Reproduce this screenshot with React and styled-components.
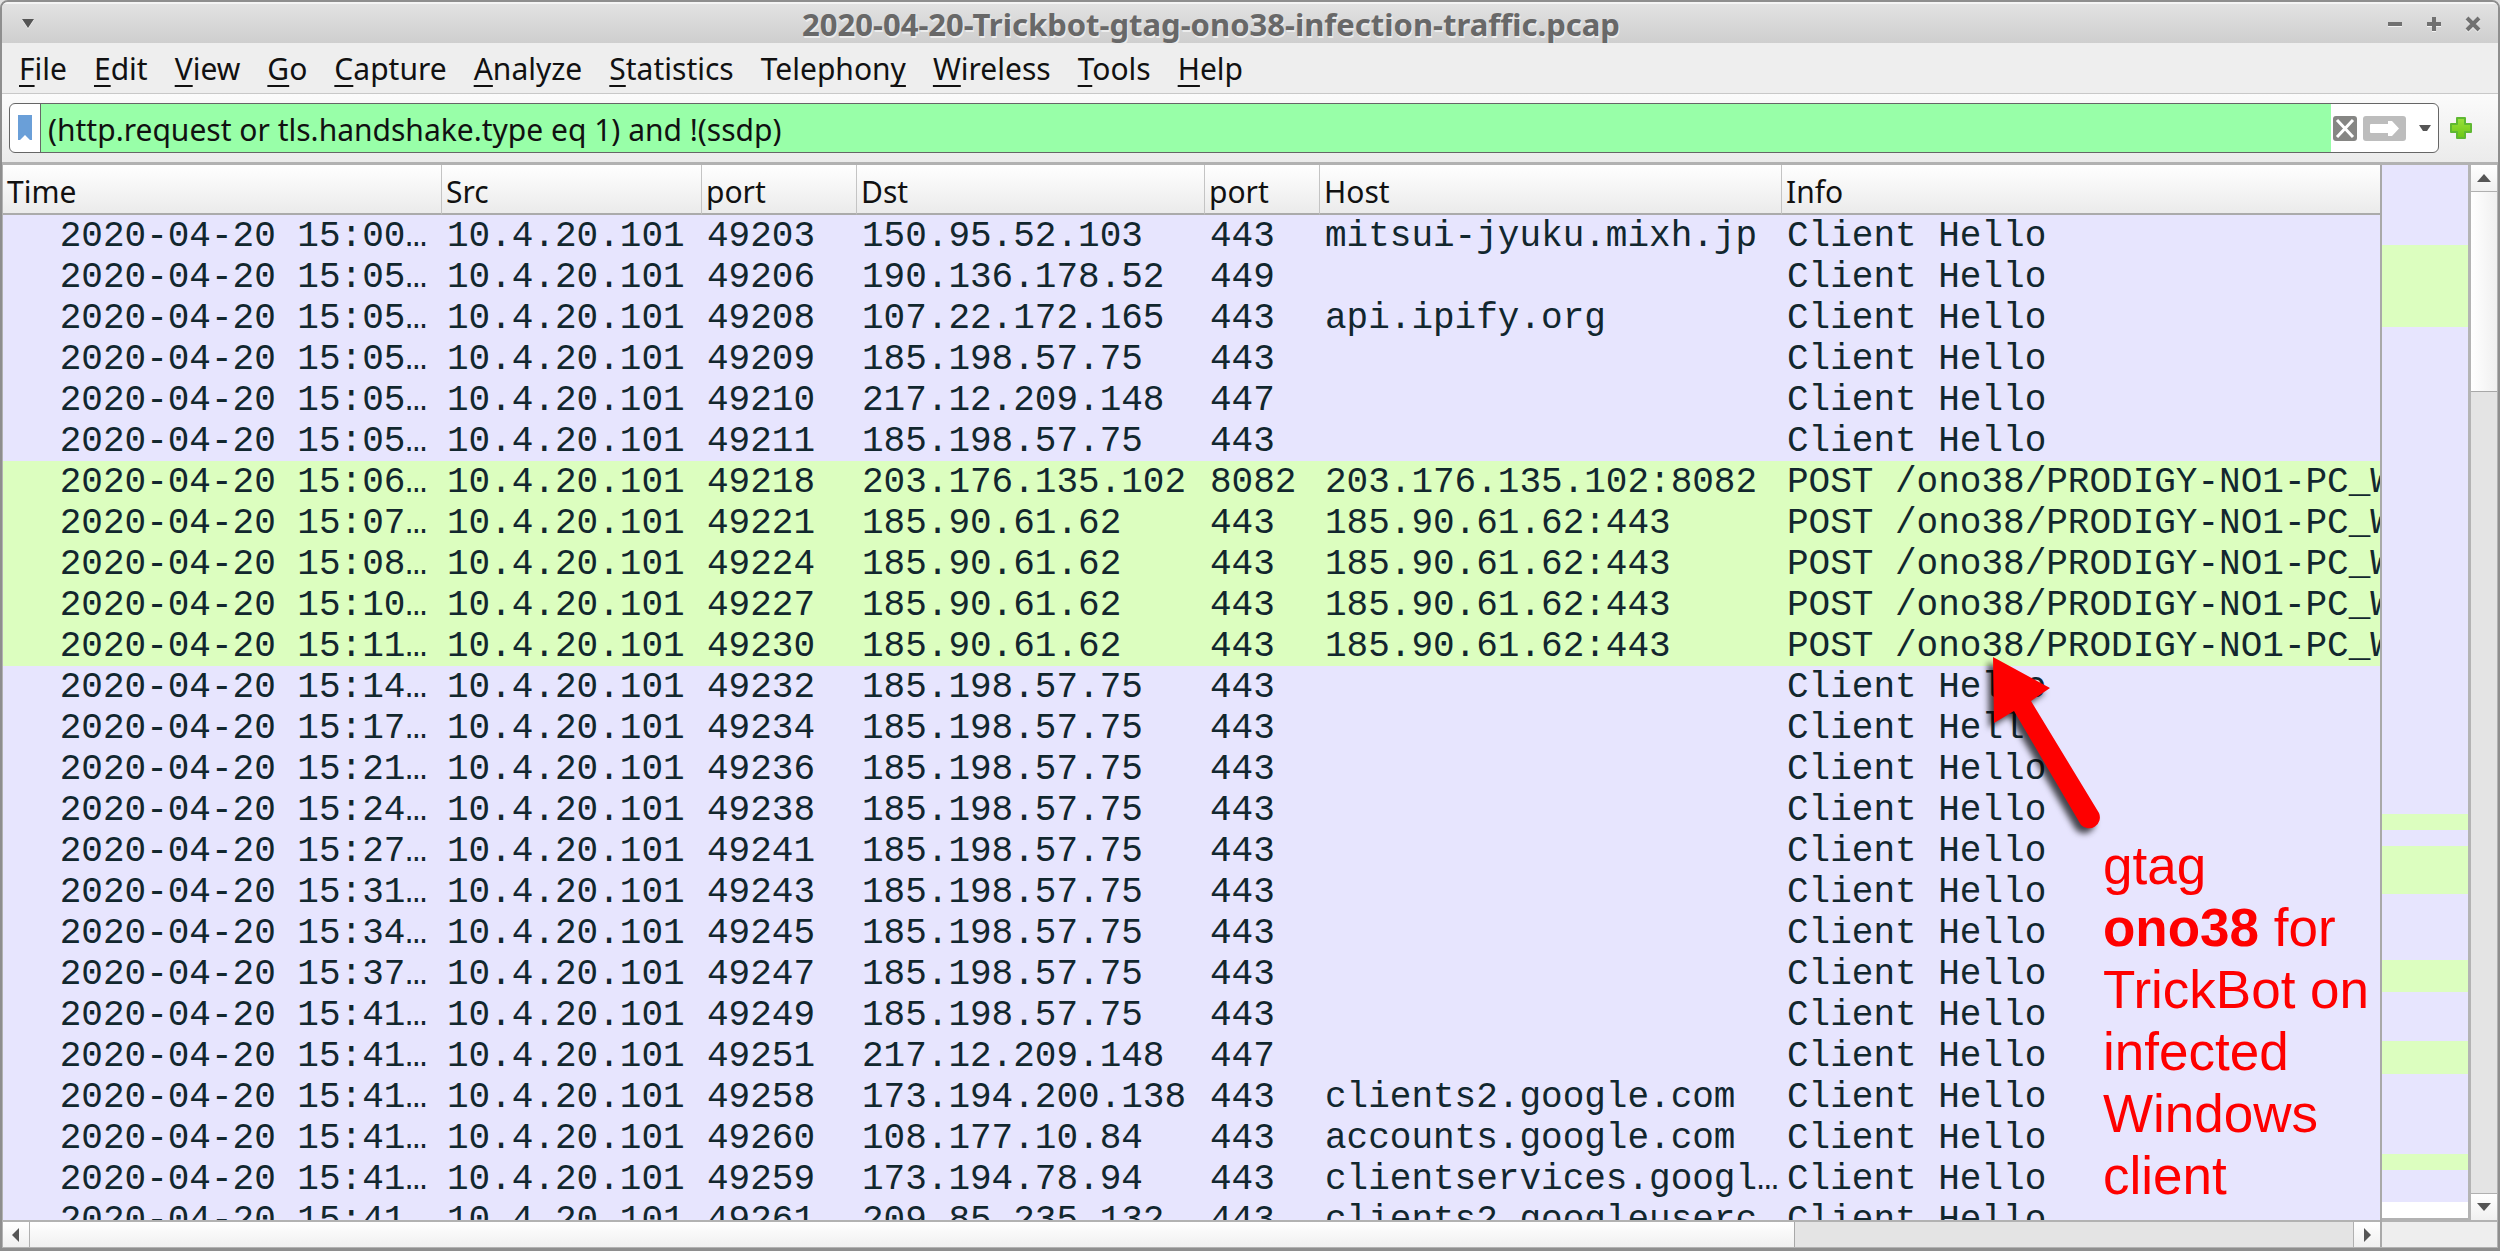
import React from "react"
import styled, { createGlobalStyle } from "styled-components"

const MENUS = [
  ["", "F", "ile"],
  ["", "E", "dit"],
  ["", "V", "iew"],
  ["", "G", "o"],
  ["", "C", "apture"],
  ["", "A", "nalyze"],
  ["", "S", "tatistics"],
  ["Telephon", "y", ""],
  ["", "W", "ireless"],
  ["", "T", "ools"],
  ["", "H", "elp"],
]

const COLUMNS = [
  { title: "Time", width: 439 },
  { title: "Src", width: 260 },
  { title: "port", width: 155 },
  { title: "Dst", width: 348 },
  { title: "port", width: 115 },
  { title: "Host", width: 462 },
  { title: "Info" },
]

const HELLO = "Client Hello"
const POST = "POST /ono38/PRODIGY-NO1-PC_W"

const PACKETS = [
  ["15:00", "49203", "150.95.52.103", "443", "mitsui-jyuku.mixh.jp", HELLO],
  ["15:05", "49206", "190.136.178.52", "449", "", HELLO],
  ["15:05", "49208", "107.22.172.165", "443", "api.ipify.org", HELLO],
  ["15:05", "49209", "185.198.57.75", "443", "", HELLO],
  ["15:05", "49210", "217.12.209.148", "447", "", HELLO],
  ["15:05", "49211", "185.198.57.75", "443", "", HELLO],
  ["15:06", "49218", "203.176.135.102", "8082", "203.176.135.102:8082", POST],
  ["15:07", "49221", "185.90.61.62", "443", "185.90.61.62:443", POST],
  ["15:08", "49224", "185.90.61.62", "443", "185.90.61.62:443", POST],
  ["15:10", "49227", "185.90.61.62", "443", "185.90.61.62:443", POST],
  ["15:11", "49230", "185.90.61.62", "443", "185.90.61.62:443", POST],
  ["15:14", "49232", "185.198.57.75", "443", "", HELLO],
  ["15:17", "49234", "185.198.57.75", "443", "", HELLO],
  ["15:21", "49236", "185.198.57.75", "443", "", HELLO],
  ["15:24", "49238", "185.198.57.75", "443", "", HELLO],
  ["15:27", "49241", "185.198.57.75", "443", "", HELLO],
  ["15:31", "49243", "185.198.57.75", "443", "", HELLO],
  ["15:34", "49245", "185.198.57.75", "443", "", HELLO],
  ["15:37", "49247", "185.198.57.75", "443", "", HELLO],
  ["15:41", "49249", "185.198.57.75", "443", "", HELLO],
  ["15:41", "49251", "217.12.209.148", "447", "", HELLO],
  ["15:41", "49258", "173.194.200.138", "443", "clients2.google.com", HELLO],
  ["15:41", "49260", "108.177.10.84", "443", "accounts.google.com", HELLO],
  ["15:41", "49259", "173.194.78.94", "443", "clientservices.googl…", HELLO],
  ["15:41", "49261", "209.85.235.132", "443", "clients2.googleuserc…", HELLO],
]

// colour bands of the intelligent scrollbar, top to bottom
const BANDS = [
  ["tls", 80],
  ["http", 82],
  ["tls", 487],
  ["http", 16],
  ["tls", 16],
  ["http", 48],
  ["tls", 66],
  ["http", 32],
  ["tls", 49],
  ["http", 33],
  ["tls", 80],
  ["http", 16],
  ["tls", 32],
  ["none", 16],
]

const FILLS = { tls: "#e7e5fe", http: "#dcfebf", none: "#ffffff" }

const Triangle = ({ points, size = 14 }) => (
  <svg width={size} height={size} viewBox="0 0 14 14" fill="#555" aria-hidden="true">
    <polygon points={points} />
  </svg>
)

const DOWN = "0,3 14,3 7,11"
const UP = "0,11 14,11 7,3"
const LEFT = "10,0 10,14 3,7"
const RIGHT = "4,0 4,14 11,7"

const App = () => (
  <>
    <GlobalStyle />
    <Window>
      <TitleBar>
        <WindowButton aria-label="Window menu">
          <Triangle points="1,2 13,2 7,11" />
        </WindowButton>
        <Title>2020-04-20-Trickbot-gtag-ono38-infection-traffic.pcap</Title>
        <WindowButton aria-label="Minimize">
          <Glyph><path d="M1 8H15" /></Glyph>
        </WindowButton>
        <WindowButton aria-label="Maximize">
          <Glyph><path d="M1 8H15M8 1V15" /></Glyph>
        </WindowButton>
        <WindowButton aria-label="Close">
          <Glyph><path d="M2 2L14 14M14 2L2 14" /></Glyph>
        </WindowButton>
      </TitleBar>

      <MenuBar>
        {MENUS.map(([before, key, after]) => (
          <MenuButton key={before + key + after}>
            {before}
            <Mnemonic>{key}</Mnemonic>
            {after}
          </MenuButton>
        ))}
      </MenuBar>

      <FilterBar>
        <FilterBox>
          <BookmarkButton aria-label="Bookmarks">
            <svg width="14" height="26" viewBox="0 0 14 26" aria-hidden="true">
              <path d="M0 0H14V25L12 25L7 20L2 25H0Z" fill="#6a9fd8" />
            </svg>
          </BookmarkButton>
          <FilterInput
            aria-label="Display filter"
            defaultValue="(http.request or tls.handshake.type eq 1) and !(ssdp)"
          />
          <IconButton aria-label="Clear filter">
            <svg width="24" height="25" viewBox="0 0 24 25" aria-hidden="true">
              <rect width="24" height="25" rx="3" fill="#868684" />
              <path d="M4 4L20 21M20 4L4 21" stroke="#fff" strokeWidth="3" />
            </svg>
          </IconButton>
          <IconButton aria-label="Apply filter">
            <svg width="43" height="25" viewBox="0 0 43 25" aria-hidden="true">
              <rect width="43" height="25" rx="3" fill="#bdbdbd" />
              <path d="M8 8H25V5H29L36 12.500L29 20H25V17H8Q7 17 7 16V9Q7 8 8 8Z" fill="#fff" />
            </svg>
          </IconButton>
          <DropButton aria-label="Recent filters">
            <Triangle points="1,4 13,4 9,10 5,10" />
          </DropButton>
        </FilterBox>
        <IconButton aria-label="Add filter button">
          <svg width="22" height="22" viewBox="0 0 22 22" aria-hidden="true">
            <defs>
              <linearGradient id="plus" x1="0" y1="0" x2="0" y2="1">
                <stop offset="0" stopColor="#9ae03c" />
                <stop offset="1" stopColor="#6cc814" />
              </linearGradient>
            </defs>
            <path
              d="M7 1H15V7H21V15H15V21H7V15H1V7H7Z"
              fill="url(#plus)"
              stroke="#5fb832"
              strokeWidth="2"
              strokeLinejoin="round"
            />
          </svg>
        </IconButton>
      </FilterBar>

      <Content>
        <ListColumn>
          <ListPane>
            <PacketTable>
              <colgroup>
                {COLUMNS.map((col, i) => (
                  <Col key={i} $width={col.width} />
                ))}
              </colgroup>
              <thead>
                <tr>
                  {COLUMNS.map((col, i) => (
                    <HeaderCell key={i} scope="col">{col.title}</HeaderCell>
                  ))}
                </tr>
              </thead>
              <tbody>
                {PACKETS.map(([time, srcPort, dst, dstPort, host, info]) => (
                  <Row key={srcPort} $kind={info === POST ? "http" : "tls"}>
                    <TimeCell>2020-04-20 {time}…</TimeCell>
                    <Cell>10.4.20.101</Cell>
                    <Cell>{srcPort}</Cell>
                    <Cell>{dst}</Cell>
                    <Cell>{dstPort}</Cell>
                    <Cell>{host}</Cell>
                    <Cell>{info}</Cell>
                  </Row>
                ))}
              </tbody>
            </PacketTable>
            <Callout>
              <Arrow width="120" height="182" viewBox="0 0 120 182" aria-hidden="true">
                <path d="M4 4L61 35L42 48L110 160A11 11 0 0 1 92 172L25 58L5 70Z" fill="#fe0000" />
              </Arrow>
              <Note>
                gtag
                <br />
                <b>ono38</b> for TrickBot on infected Windows client
              </Note>
            </Callout>
          </ListPane>
          <HorizontalBar>
            <ScrollButton aria-label="Scroll left">
              <Triangle points={LEFT} />
            </ScrollButton>
            <HorizontalTrack>
              <HorizontalThumb />
            </HorizontalTrack>
            <ScrollButton aria-label="Scroll right">
              <Triangle points={RIGHT} />
            </ScrollButton>
          </HorizontalBar>
        </ListColumn>
        <SideColumn>
          <SidePane>
            <Minimap>
              {BANDS.map(([kind, size], i) => (
                <Band key={i} $kind={kind} $size={size} />
              ))}
            </Minimap>
            <VerticalBar>
              <ScrollButton $vertical aria-label="Scroll up">
                <Triangle points={UP} />
              </ScrollButton>
              <VerticalTrack>
                <VerticalThumb />
              </VerticalTrack>
              <ScrollButton $vertical aria-label="Scroll down">
                <Triangle points={DOWN} />
              </ScrollButton>
            </VerticalBar>
          </SidePane>
          <Corner />
        </SideColumn>
      </Content>
    </Window>
  </>
)

export default App

const GlobalStyle = createGlobalStyle`
  * {
    box-sizing: border-box;
  }
  body {
    margin: 0;
    background: #e0e0e0;
    font-family: "Noto Sans", "Open Sans", sans-serif;
    font-size: 30px;
    color: #111;
  }
  button,
  input {
    margin: 0;
    padding: 0;
    border: 0;
    background: none;
    color: inherit;
    font: inherit;
  }
`

const Window = styled.div`
  display: flex;
  flex-direction: column;
  height: 100vh;
  border: solid #8e8e8e;
  border-width: 2px 2px 3px;
  border-radius: 8px 8px 0 0;
  background: #eeeeee;
  overflow: hidden;
`

const TitleBar = styled.header`
  display: flex;
  flex: none;
  align-items: center;
  height: 41px;
  padding: 0 6px;
  border-top: 2px solid #f4f4f4;
  background: linear-gradient(#e2e2e2, #cecece);
`

const Title = styled.h1`
  flex: 1;
  margin: 0;
  font-size: 31px;
  font-weight: 700;
  line-height: 38px;
  text-align: center;
  color: #686868;
  text-shadow: 1px 2px 0 #ececec;
  white-space: nowrap;
`

const WindowButton = styled.button`
  display: flex;
  align-items: center;
  justify-content: center;
  width: 39px;
  height: 38px;
  filter: drop-shadow(0 1px 0 #f4f4f4);
`

const Glyph = styled.svg.attrs({ viewBox: "0 0 16 16", "aria-hidden": true })`
  width: 16px;
  height: 16px;
  fill: none;
  stroke: #717171;
  stroke-width: 4;
`

const MenuBar = styled.nav`
  display: flex;
  flex: none;
  align-items: center;
  gap: 1px;
  height: 51px;
  padding: 2px 4px 0;
  border-bottom: 1px solid #c8c8c8;
`

const MenuButton = styled.button`
  padding: 0 13px;
  line-height: 42px;
  white-space: nowrap;
`

const Mnemonic = styled.span`
  text-decoration: underline;
  text-decoration-thickness: 2px;
  text-decoration-skip-ink: none;
  text-underline-offset: 5px;
`

const FilterBar = styled.div`
  display: flex;
  flex: none;
  align-items: center;
  gap: 11px;
  height: 68px;
  padding: 0 26px 0 7px;
  background: linear-gradient(#fbfbfb, #ebebeb);
`

const FilterBox = styled.div`
  display: flex;
  flex: 1;
  align-items: center;
  height: 50px;
  border: 1px solid #666;
  border-radius: 6px;
  background: #fff;
  overflow: hidden;
`

const IconButton = styled.button`
  display: flex;
  flex: none;
  align-items: center;
  justify-content: center;
`

const BookmarkButton = styled(IconButton)`
  width: 31px;
  height: 48px;
  border-right: 1px solid #666;
`

const DropButton = styled(IconButton)`
  width: 26px;
  margin-left: 6px;
`

const FilterInput = styled.input`
  flex: 1;
  min-width: 0;
  height: 48px;
  padding: 2px 7px 0;
  background: #98ffa8;
  outline: none;

  & + button {
    margin: 0 6px 0 2px;
  }
`

const Content = styled.main`
  display: flex;
  flex: 1;
  min-height: 0;
  border: solid #b2b2b2;
  border-width: 3px 1px 1px;
`

const ListColumn = styled.section`
  display: flex;
  flex: 1;
  flex-direction: column;
  min-width: 0;
  border-right: 2px solid #a9a9a9;
`

const ListPane = styled.div`
  position: relative;
  flex: 1;
  min-height: 0;
  background: ${FILLS.tls};
  overflow: hidden;
`

const PacketTable = styled.table`
  width: 100%;
  table-layout: fixed;
  border-collapse: separate;
  border-spacing: 0;
`

const Col = styled.col`
  width: ${props => (props.$width ? `${props.$width}px` : "auto")};
`

const HeaderCell = styled.th`
  height: 50px;
  padding: 6px 4px 0;
  border-right: 1px solid #c4c4c4;
  border-bottom: 2px solid #ababab;
  background: linear-gradient(#ffffff, #ebebeb);
  font-weight: 400;
  line-height: 42px;
  text-align: left;

  &:last-child {
    border-right: 0;
  }
`

const Row = styled.tr`
  background: ${props => FILLS[props.$kind]};
`

const Cell = styled.td`
  height: 41px;
  padding: 2px 0 0 5px;
  color: #12272e;
  font-family: "Liberation Mono", monospace;
  font-size: 36px;
  line-height: 39px;
  white-space: nowrap;
  overflow: hidden;
`

const TimeCell = styled(Cell)`
  padding: 2px 15px 0 0;
  text-align: right;
`

const Callout = styled.aside`
  position: absolute;
  top: 488px;
  right: 0;
  width: 391px;
`

const Arrow = styled.svg`
  display: block;
  overflow: visible;
  filter: drop-shadow(-5px 5px 3px rgba(0, 0, 0, 0.7));
`

const Note = styled.p`
  width: 277px;
  margin: 0 0 0 114px;
  color: #fe0000;
  font-family: "Liberation Sans", sans-serif;
  font-size: 53px;
  line-height: 62px;
`

const HorizontalBar = styled.div`
  display: flex;
  flex: none;
  height: 27px;
  border-top: 2px solid #b2b2b2;
`

const ScrollButton = styled.button`
  display: flex;
  flex: none;
  align-items: center;
  justify-content: center;
  width: 26px;
  height: ${props => (props.$vertical ? "26px" : "auto")};
  background: linear-gradient(#ffffff, #f0f0f0);
`

const HorizontalTrack = styled.div`
  flex: 1;
  border: solid #b0b0b0;
  border-width: 0 1px;
  background: #e4e4e4;
`

const HorizontalThumb = styled.div`
  width: 76%;
  height: 100%;
  border-right: 1px solid #a8a8a8;
  background: linear-gradient(#ffffff, #f0f0f0);
`

const SideColumn = styled.div`
  display: flex;
  flex: none;
  flex-direction: column;
`

const SidePane = styled.div`
  display: flex;
  flex: 1;
  min-height: 0;
`

const Minimap = styled.div`
  display: flex;
  flex-direction: column;
  width: 86px;
  border-bottom: 2px solid #b2b2b2;
`

const Band = styled.div`
  flex: ${props => props.$size} 0 0;
  background: ${props => FILLS[props.$kind]};
`

const VerticalBar = styled.div`
  display: flex;
  flex-direction: column;
  border-left: 3px solid #b4b4b4;
`

const VerticalTrack = styled.div`
  flex: 1;
  border: solid #b0b0b0;
  border-width: 1px 0;
  background: #e4e4e4;
`

const VerticalThumb = styled.div`
  height: 20%;
  border-bottom: 1px solid #a8a8a8;
  background: linear-gradient(to right, #ffffff, #f0f0f0);
`

const Corner = styled.div`
  height: 27px;
  border-top: 2px solid #b2b2b2;
`
